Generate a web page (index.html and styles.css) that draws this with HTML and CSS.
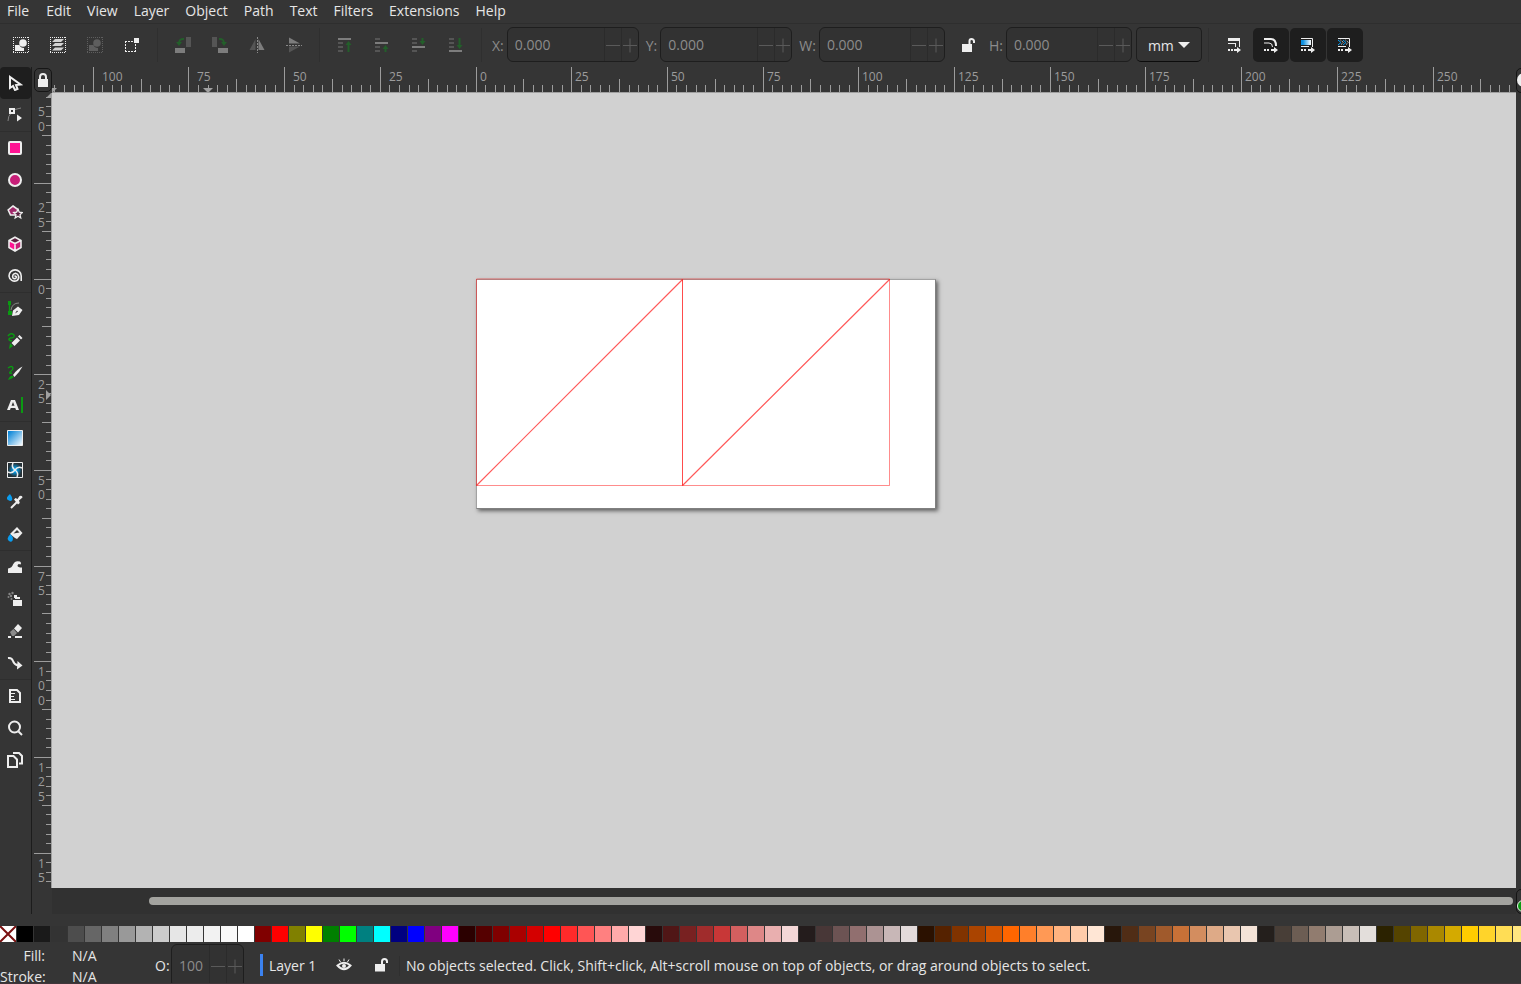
FILE: index.html
```html
<!DOCTYPE html>
<html lang="en">
<head>
<meta charset="utf-8">
<title>Inkscape</title>
<link rel="stylesheet" href="styles.css">
</head>
<body>
<nav class="menubar" aria-label="Main menu">
  <button>File</button><button>Edit</button><button>View</button><button>Layer</button><button>Object</button><button>Path</button><button>Text</button><button>Filters</button><button>Extensions</button><button>Help</button>
</nav>

<div class="toolbar">
  <div class="group">
    <button class="tb" aria-label="Select all"><svg viewBox="0 0 16 16"><path class="dots" d="M0 .5H16M0 15.5H16M.5 0V16M15.5 0V16"/><circle cx="10" cy="6" r="3.8"/><path d="M2 8h4.500q1 3 4.500 3v3H2z"/></svg></button>
    <button class="tb" aria-label="Select all in all layers"><svg viewBox="0 0 16 16"><path class="dots" d="M0 .5H16M0 15.5H16M.5 0V16M15.5 0V16"/><path d="M5 2h9l-3 3H2zM5 6h9l-3 3H2zM5 10.500h9l-3 3H2z" opacity=".85"/></svg></button>
    <button class="tb off" aria-label="Deselect"><svg viewBox="0 0 16 16"><path class="dots" d="M0 .5H16M0 15.5H16M.5 0V16M15.5 0V16"/><circle cx="10" cy="6" r="3.8"/><path d="M2 8h4.500q1 3 4.500 3v3H2z"/></svg></button>
    <button class="tb" aria-label="Toggle selection box"><svg viewBox="0 0 16 16"><path class="dash" d="M1 4.500H12M1 14.500H12M1.500 4V15M11.500 4V15"/><path d="M10 1h5v5h-5z"/></svg></button>
  </div>
  <div class="group">
    <button class="tb dim" aria-label="Rotate counterclockwise"><svg viewBox="0 0 16 16"><path class="shade" d="M11 0h5v10h-5z"/><path d="M0 11h10v5H0z"/><path class="arrow" d="M9 2Q4 1.500 4 6.500"/><path class="green" d="M1 5h6L4 9z"/></svg></button>
    <button class="tb dim" aria-label="Rotate clockwise"><svg viewBox="0 0 16 16"><path class="shade" d="M0 0h5v10H0z"/><path d="M6 11h10v5H6z"/><path class="arrow" d="M7 2Q12 1.500 12 6.500"/><path class="green" d="M9 5h6l-3 4z"/></svg></button>
    <button class="tb dim" aria-label="Flip horizontal"><svg viewBox="0 0 16 16"><path class="shade" d="M6.500 2v11H.5z"/><path d="M9.500 2v11h6z"/><path class="dash" d="M8.500 0V16"/></svg></button>
    <button class="tb dim" aria-label="Flip vertical"><svg viewBox="0 0 16 16"><path d="M3 .5v6h11z"/><path class="shade" d="M3 15.500v-6h11z"/><path class="dash" d="M0 8.500H16"/></svg></button>
  </div>
  <div class="group">
    <button class="tb dim" aria-label="Raise to top"><svg viewBox="0 0 16 16"><path d="M1 1h13v2H1z"/><path class="shade" d="M1 5h5v2H1zM1 9h5v2H1zM1 13h5v2H1z"/><path class="green" d="M11.500 4l3 4h-2v7h-2V8h-2z"/></svg></button>
    <button class="tb dim" aria-label="Raise"><svg viewBox="0 0 16 16"><path class="shade" d="M1 1h5v2H1zM1 9h5v2H1zM1 13h5v2H1z"/><path d="M1 5h13v2H1z"/><path class="green" d="M11.500 8l3 4h-2v3h-2v-3h-2z"/></svg></button>
    <button class="tb dim" aria-label="Lower"><svg viewBox="0 0 16 16"><path class="shade" d="M1 1h5v2H1zM1 5h5v2H1zM1 13h5v2H1z"/><path d="M1 9h13v2H1z"/><path class="green" d="M11.500 8l3-4h-2V1h-2v3h-2z"/></svg></button>
    <button class="tb dim" aria-label="Lower to bottom"><svg viewBox="0 0 16 16"><path class="shade" d="M1 1h5v2H1zM1 5h5v2H1zM1 9h5v2H1z"/><path d="M1 13h13v2H1z"/><path class="green" d="M11.500 12l3-4h-2V1h-2v7h-2z"/></svg></button>
  </div>
  <div class="fields">
    <label for="fx">X:</label><span class="spin"><input id="fx" value="0.000" disabled><button disabled aria-label="Decrease X"></button><button disabled aria-label="Increase X" class="plus"></button></span>
    <label for="fy">Y:</label><span class="spin"><input id="fy" value="0.000" disabled><button disabled aria-label="Decrease Y"></button><button disabled aria-label="Increase Y" class="plus"></button></span>
    <label for="fw">W:</label><span class="spin narrow"><input id="fw" value="0.000" disabled><button disabled aria-label="Decrease W"></button><button disabled aria-label="Increase W" class="plus"></button></span>
    <button class="lock" aria-label="Lock width and height"><svg viewBox="0 0 16 16"><path d="M1 7h10v8H1z"/><path class="line" d="M8.500 8V4Q8.500 2 10.500 2T13 4V6"/></svg></button>
    <label for="fh">H:</label><span class="spin narrow"><input id="fh" value="0.000" disabled><button disabled aria-label="Decrease H"></button><button disabled aria-label="Increase H" class="plus"></button></span>
    <span class="units"><select aria-label="Units"><option>mm</option></select></span>
  </div>
  <div class="group affect">
    <button class="tb" aria-label="Scale stroke width"><svg viewBox="0 0 16 16"><path d="M2 1h12v9h-1V4H2zM2 6h8v4H9V7H2zM2 12h2v2H2zM5 12h2v2H5zM8 12h3v-2l4 3-4 3v-2H8z"/></svg></button>
    <button class="tb on" aria-label="Scale rounded corners"><svg viewBox="0 0 16 16"><path class="line" d="M1 2H8Q13 2 13 9"/><path class="thin" d="M1 6H6Q9.500 6 9.500 10"/><path d="M1 12h2v2H1zM4 12h2v2H4zM8 12h3v-2l4 3-4 3v-2H8z"/></svg></button>
    <button class="tb on" aria-label="Move gradients"><svg viewBox="0 0 16 16"><defs><linearGradient id="g1"><stop offset=".2" stop-color="#0a8fe0"/><stop offset="1" stop-color="#fff"/></linearGradient></defs><path class="thin" d="M1 1.500H12.500V10"/><path fill="url(#g1)" d="M1 3h10v5H1z"/><path d="M1 9h8v1H1zM1 12h2v2H1zM4 12h2v2H4zM8 12h3v-2l4 3-4 3v-2H8z"/></svg></button>
    <button class="tb on" aria-label="Move patterns"><svg viewBox="0 0 16 16"><path class="thin" d="M1 1.500H12.500V10M1 9.500H9"/><path class="pat" d="M1 3l3 2.500L1 8M6 3l3 2.500L6 8"/><path class="thin weave" d="M3.500 3l3 2.500L3.500 8M8.500 3l3 2.500L8.500 8"/><path d="M1 12h2v2H1zM4 12h2v2H4zM8 12h3v-2l4 3-4 3v-2H8z"/></svg></button>
  </div>
</div>

<main class="work">
  <div class="toolbox" role="toolbar" aria-label="Tools">
    <button class="on" aria-label="Selector"><svg viewBox="0 0 16 16"><path class="line" d="M3 2V13L6 11L8 15L10.500 14L9 10L13.500 9.500Z"/></svg></button>
    <button aria-label="Node"><svg viewBox="0 0 16 16"><path class="faint" d="M1 14Q1 9 4 6M8 2.500L14 1"/><path fill-rule="evenodd" d="M2 1h6v6H2zM4 3v2h2V3zM10 7.500l5 3.500-5 3.500z"/></svg></button>
    <hr>
    <button aria-label="Rectangle"><svg viewBox="0 0 16 16"><rect class="pink" x="2" y="2" width="12" height="12" rx="1"/></svg></button>
    <button aria-label="Ellipse"><svg viewBox="0 0 16 16"><circle class="pink deep" cx="8" cy="8" r="6"/></svg></button>
    <button aria-label="Star"><svg viewBox="0 0 16 16"><path class="plum" d="M6 2L11 5.500L9.500 11H3.500L1.200 6Z"/><path class="plum star" d="M11 5.200l1.300 3 3 .3-2.300 2.200.7 3.300-2.700-1.700-2.800 1.700.8-3.300-2.300-2.200 3-.3z"/></svg></button>
    <button aria-label="3D box"><svg viewBox="0 0 16 16"><path fill="#ff1493" d="M2 4.500l6 3V15l-6-3z"/><path fill="#c71f78" d="M14 4.500l-6 3V15l6-3z"/><path fill="#5c2040" d="M8 1l6 3.500-6 3-6-3z"/><path class="line box" d="M8 1.200L14 4.500V11.500L8 15L2 11.500V4.500ZM2 4.500L8 7.500L14 4.500M8 7.500V15"/></svg></button>
    <button aria-label="Spiral"><svg viewBox="0 0 16 16"><path class="line spiral" d="M7.500 8.500A1.200 1.200 0 0 1 9.500 9A2 2 0 0 1 6 10A3.200 3.200 0 0 1 8.500 5.300A4 4 0 0 1 10 12.500A5.500 5.500 0 0 1 2 8A6 6 0 0 1 14.200 8V13"/></svg></button>
    <hr>
    <button aria-label="Pen"><svg viewBox="0 0 16 16"><path class="gline" d="M2.500 2V12"/><path class="green2" d="M1 0h3v4H1zM1 10h4v4H1z"/><path class="faint" d="M4 9Q5 2 12 2"/><path fill-rule="evenodd" d="M5 15L6 9.500L11 5.500L15.500 9L12 14ZM8 12.500L11 10.500L10 9.500Z"/></svg></button>
    <button aria-label="Pencil"><svg viewBox="0 0 16 16"><path class="gline" d="M1 3Q4-1 7 2Q8 5 3 5Q0 7 5 8"/><path class="green2" d="M3 10l3 3-4 3z"/><path d="M4.500 10L10 4.500L13 7.500L7.500 13ZM11 3.500L12.500 2L15.500 5L14 6.500Z"/></svg></button>
    <button aria-label="Calligraphy"><svg viewBox="0 0 16 16"><path class="gline" d="M1 3Q5 0 6 3Q6 5 3 7Q2 9 5 8"/><path class="green2" d="M1 15Q3 10 6 11T1 15z"/><path d="M6 10Q10 4 15.500 1.500Q12 8 7.500 12z"/></svg></button>
    <button aria-label="Text"><svg viewBox="0 0 16 16"><path fill-rule="evenodd" d="M0 13L4 3h4l4 10H9l-.7-2H3.700L3 13zM4.500 8.800h3L6 5z"/><path class="green2" d="M14 0h2v16h-2z"/></svg></button>
    <hr>
    <button aria-label="Gradient"><svg viewBox="0 0 16 16"><defs><linearGradient id="g2" x2="1" y2="1"><stop offset=".1" stop-color="#0a86d8"/><stop offset="1" stop-color="#fff"/></linearGradient></defs><path class="frame" fill="url(#g2)" d="M.5 .5h15v15H.5z"/></svg></button>
    <button aria-label="Mesh"><svg viewBox="0 0 16 16"><defs><radialGradient id="g3"><stop offset=".2" stop-color="#00a5f5"/><stop offset=".9" stop-color="#263238"/></radialGradient></defs><path class="frame" fill="url(#g3)" d="M.5 .5h15v15H.5z"/><path class="mesh" d="M8 8Q4 5 6 1M8 8Q11 4 15 6M8 8Q12 11 10 15M8 8Q5 12 1 10"/></svg></button>
    <button aria-label="Dropper"><svg viewBox="0 0 16 16"><path class="blue" d="M3 0Q6 4 5 6T1 6T3 0z"/><path class="line" d="M4 14L10.500 7.500"/><path d="M7 5.500l1.500-1.500L10.500 5l2-3q3-1 3 1.500L12 6.500l.8 2.500L11 10.500z"/></svg></button>
    <button aria-label="Paint bucket"><svg viewBox="0 0 16 16"><path d="M3 8L10 1L15.500 7L10 13L8 12z"/><path fill="#353535" d="M6.500 7.500L10 4L12.500 6.500z"/><path class="blue" d="M3.500 8Q7 12 5.500 14.500T1.500 14.500T3.500 8z"/></svg></button>
    <hr>
    <button aria-label="Tweak"><svg viewBox="0 0 16 16"><path d="M1 14V9.500Q5 9 6 5.500Q8 1 13 2.500Q15 4 13.500 5.500Q11 4 10.500 6.500Q10.500 8.500 15 8.500V14z"/></svg></button>
    <button aria-label="Spray"><svg viewBox="0 0 16 16"><path d="M6 9h9v6H6zM8 6h5v2H8zM7 4h3v3H7z"/><g fill="#858585"><circle cx="2.500" cy="3" r="1.200"/><circle cx="5.500" cy="2" r="1.200"/><circle cx="4" cy="5" r="1.200"/><circle cx="1.500" cy="6" r="1"/><circle cx="4.500" cy="8" r="1"/></g></svg></button>
    <button aria-label="Eraser"><svg viewBox="0 0 16 16"><path d="M7 5.500L11 1L15 5L11 9.500zM1 13h3v2H1zM8 13h7v2H8z"/><path fill="#8c8c8c" d="M3 9L6.500 6L10 10L7 13H5z"/></svg></button>
    <button aria-label="Connector"><svg viewBox="0 0 16 16"><path class="line" d="M1 3Q5 2.500 6 6T11 10.500"/><path d="M10.500 6L15.500 10.500L10 14.500z"/></svg></button>
    <hr>
    <button aria-label="Measure"><svg viewBox="0 0 16 16"><path class="line" d="M3 2h7l3 3v9H3z"/><path class="thin" d="M4 5.500h4M4 8.500h3M4 11.500h4"/></svg></button>
    <button aria-label="Zoom"><svg viewBox="0 0 16 16"><circle class="line" cx="7.500" cy="7" r="5.500"/><path class="line" d="M11.500 11.500L15 15"/></svg></button>
    <button aria-label="Pages"><svg viewBox="0 0 16 16"><path class="line" d="M1 4h5.500L10 7.500V15H1zM6 1h6L15 4v7.500h-3"/></svg></button>
  </div>
  <div class="corner"><button aria-label="Lock guides"><svg viewBox="0 0 12 16"><path d="M1 7h10v8H1z"/><path class="line" d="M3 8V5Q3 2 6 2T9 5V8"/></svg></button></div>
  <div class="ruler-h"><svg id="rh" width="100%" height="26"></svg></div>
  <div class="ruler-v"><svg id="rv" width="20" height="100%"></svg></div>
  <div class="canvas">
    <div class="page"></div>
    <svg class="drawing" width="420" height="214" viewBox="0 0 420 214"><path d="M.5 206.500V0H413.500M.5 206.500H413.500V0"/><path class="strong" d="M206.500 .5V206.500"/><path class="wide" d="M.5 206.500L206.500 .5M206.500 206.500L413.500 .5"/></svg>
  </div>
  <div class="edge"><button aria-label="Sticky zoom"></button><button class="cms" aria-label="Color management"></button></div>
  <div class="scroll"><div class="thumb"></div></div>
</main>

<div class="palette" id="palette"></div>

<footer class="status">
  <dl><dt>Fill:</dt><dd>N/A</dd><dt>Stroke:</dt><dd>N/A</dd></dl>
  <label for="op">O:</label><span class="spin opacity"><input id="op" value="100" disabled><button disabled aria-label="Decrease opacity"></button><button disabled aria-label="Increase opacity" class="plus"></button></span>
  <button class="layer">Layer 1</button>
  <button class="sicon eye" aria-label="Toggle layer visibility"><svg viewBox="0 0 16 16"><path class="line" d="M1.500 8.500Q8 3 14.500 8.500Q8 16 1.500 8.500Z"/><circle cx="8" cy="9" r="2"/><path class="thin" d="M3 2.500L4.500 5M8 1.500V4M13 2.500L11.500 5"/></svg></button>
  <button class="sicon" aria-label="Toggle layer lock"><svg viewBox="0 0 16 16"><path d="M2 7h10v7.500H2z"/><path class="line" d="M9 8V4.500Q9 2 11.500 2T14 4.500V6"/></svg></button>
  <p>No objects selected. Click, Shift+click, Alt+scroll mouse on top of objects, or drag around objects to select.</p>
</footer>
<script src="app.js"></script>
</body>
</html>
```
FILE: styles.css
```css
* { box-sizing: border-box; }
body {
  margin: 0;
  height: 100vh;
  display: flex;
  flex-direction: column;
  overflow: hidden;
  background: #353535;
  color: #e6e6e6;
  font: 14px/20px "Open Sans", "Noto Sans", sans-serif;
}
button, input, select {
  font: inherit;
  color: inherit;
  background: none;
  border: 0;
  margin: 0;
  padding: 0;
}
svg { display: block; fill: #eeeeee; }
button svg { width: 16px; height: 16px; }

.line { fill: none; stroke: #eeeeee; stroke-width: 2; }
.thin { fill: none; stroke: #eeeeee; stroke-width: 1; }
.weave { stroke-dasharray: 1 1; }
.pat { fill: none; stroke: #0a9df0; stroke-width: 1; }
.faint { fill: none; stroke: #858585; stroke-width: 1; }
.dots { fill: none; stroke: #eeeeee; stroke-width: 1; stroke-dasharray: 1 1; }
.dash { fill: none; stroke: #eeeeee; stroke-width: 1; stroke-dasharray: 2 1; }
.pink { fill: #ff1493; stroke: #eeeeee; stroke-width: 2; }
.deep { fill: #c71f78; }
.plum { fill: #a0286a; stroke: #eeeeee; stroke-width: 1.6; }
.star { fill: #5c2040; stroke-width: 1.3; }
.box { stroke-width: 1.6; }
.spiral { stroke-width: 1.6; }
.mesh { fill: none; stroke: #eeeeee; stroke-width: 1.5; }
.gline { fill: none; stroke: #0b9a12; stroke-width: 1.4; }
.green2 { fill: #0b9a12; }
.blue { fill: #0a9df0; }
.frame { stroke: #eeeeee; stroke-width: 1; }

.menubar {
  flex: none;
  display: flex;
  height: 24px;
  border-bottom: 1px solid #2e2e2e;
}
.menubar button { padding: 0 8px 2px; }
.menubar button:first-child { padding: 0 9px 2px 7px; }

.toolbar { flex: none; display: flex; align-items: center; height: 43px; padding-bottom: 2px; }
.group {
  display: flex;
  gap: 1px;
  padding: 0 7px;
  border-right: 1px solid #2f2f2f;
}
.group:first-child { padding-left: 3px; }
.affect { border: 0; border-left: 1px solid #2f2f2f; margin-left: 6px; }
.tb {
  width: 36px;
  height: 34px;
  display: grid;
  place-items: center;
  border-radius: 5px;
}
.tb.on { background: #1e1e1e; }
.tb.off svg { opacity: .22; }
.dim svg { fill: #7d7d7d; }
.dim .shade { fill: #555555; }
.dim .dash { stroke: #8a8a8a; }
.dim .green { fill: #235f2a; }
.dim .arrow { fill: none; stroke: #235f2a; stroke-width: 2; }

.fields { display: flex; align-items: center; padding-left: 10px; color: #8c8c8c; }
.fields label { margin: 3px 3px 0 7px; }
.fields label:first-child { margin-left: 0; }
.spin {
  display: flex;
  width: 132px;
  height: 35px;
  border: 1px solid #1e1e1e;
  border-radius: 6px;
  background: #323232;
  color: #8c8c8c;
  overflow: hidden;
}
.narrow { width: 126px; }
.spin input { flex: 1; min-width: 0; padding: 1px 0 0 7px; }
.spin button {
  position: relative;
  width: 17px;
  border-left: 1px solid #2b2b2b;
}
.spin button::before, .plus::after {
  content: "";
  position: absolute;
  left: 1px;
  right: 1px;
  top: 50%;
  height: 1px;
  background: #5a5a5a;
}
.spin .plus::after { transform: rotate(90deg); }
.lock { width: 42px; height: 34px; padding-left: 6px; display: grid; place-items: center; }
.fields .lock + label { margin-left: 2px; }
.units { position: relative; margin-left: 4px; color: #e6e6e6; }
.units select {
  appearance: none;
  display: block;
  width: 66px;
  height: 35px;
  padding: 3px 0 0 11px;
  border: 1px solid #1e1e1e;
  border-bottom-color: #0c0c0c;
  border-radius: 5px;
  background: #333333;
}
.units::after {
  content: "";
  position: absolute;
  right: 12px;
  top: 15px;
  border: 6px solid transparent;
  border-top: 6px solid #eeeeee;
  border-bottom: 0;
  pointer-events: none;
}

.work {
  flex: 1;
  min-height: 0;
  display: grid;
  grid-template: 26px minmax(0, 1fr) 26px / 32px 20px minmax(0, 1fr) 5px;
}
.toolbox {
  grid-row: 1 / 4;
  border-right: 1px solid #1c1c1c;
  overflow: hidden;
}
.toolbox button {
  display: grid;
  place-items: center;
  width: 31px;
  height: 32px;
  padding-right: 1px;
  border-radius: 4px;
}
.toolbox .on { background: #1e1e1e; }
.toolbox hr { margin: 0; border: 0; height: 1px; background: #2e2e2e; }
.corner { padding: 1px 0 0 2px; }
.corner button {
  width: 18px;
  height: 24px;
  display: grid;
  place-items: center;
  border: 1px solid #161616;
  border-radius: 5px;
}
.corner svg { width: 12px; }
.ruler-h { overflow: hidden; border-bottom: 1px solid #a0a0a0; }
.ruler-v { grid-column: 2; grid-row: 2; overflow: hidden; border-right: 1px solid #a0a0a0; }
.tick { stroke: #9c9c9c; stroke-width: 1; fill: none; shape-rendering: crispEdges; }
.mark { fill: #a0a0a0; }
.num { fill: #9c9c9c; font-size: 12px; }
.canvas { position: relative; overflow: hidden; background: #d1d1d1; }
.page {
  position: absolute;
  left: 424px;
  top: 186px;
  width: 460px;
  height: 230px;
  background: #ffffff;
  border: 1px solid #a2a2a2;
  border-right-color: #808080;
  border-bottom-color: #808080;
  box-shadow: 2px 2px 4px #606060;
}
.drawing {
  position: absolute;
  left: 424px;
  top: 186px;
  overflow: visible;
  fill: none;
  stroke: #ff0000;
  stroke-opacity: .45;
  stroke-width: 1;
}
.strong { stroke-opacity: .7; }
.wide { stroke-width: 1.2; stroke-opacity: .65; }
.edge {
  grid-column: 4;
  grid-row: 1 / 4;
  display: flex;
  flex-direction: column;
  justify-content: space-between;
  padding-top: 1px;
  overflow: hidden;
}
.edge button {
  position: relative;
  width: 24px;
  height: 25px;
  border: 1px solid #141414;
  border-radius: 5px;
}
.edge button::before {
  content: "";
  position: absolute;
  left: 0;
  top: 4px;
  width: 14px;
  height: 14px;
  border-radius: 50%;
  background: #eeeeee;
}
.edge .cms::before {
  top: 10px;
  width: 10px;
  height: 10px;
  background: #0b9a12;
  border: 1px solid #eeeeee;
}
.scroll { grid-column: 3; grid-row: 3; padding: 9px 3px 0 97px; background: #313131; }
.thumb { height: 8px; border-radius: 4px; background: #a3a39f; }

.palette { flex: none; display: flex; gap: 1px; height: 28px; padding-top: 12px; overflow: hidden; }
.swatch { flex: none; width: 16px; height: 16px; }
.none { background: #ffffff; fill: none; stroke: #7a1010; stroke-width: 2; }

.status {
  flex: none;
  display: flex;
  align-items: center;
  height: 42px;
  overflow: hidden;
  border-bottom: 1px solid #41353a;
}
.status dl {
  display: grid;
  grid-template-columns: 45px 60px;
  column-gap: 27px;
  row-gap: 1px;
  width: 155px;
  margin: 0;
  padding-top: 7px;
}
.status dt { text-align: right; }
.status dd { margin: 0; }
.status label { width: 16px; margin-top: 6px; }
.opacity { width: 73px; height: 44px; margin-top: 6px; flex: none; }
.layer {
  height: 22px;
  margin: 4px 0 0 16px;
  padding: 2px 0 0 6px;
  width: 65px;
  text-align: left;
  line-height: 20px;
  white-space: nowrap;
  border-left: 3px solid #3b82f0;
}
.sicon { width: 37px; margin-top: 4px; display: grid; place-items: center; }
.status p {
  margin: 6px 0 0;
  padding-left: 6px;
  border-left: 1px solid #2f2f2f;
  white-space: nowrap;
}
```
FILE: app.js
```js
const NS = "http://www.w3.org/2000/svg";
const STEP = 9.57; // pixels for 2.5 mm

function add(svg, name, cls, attrs, text) {
  const el = document.createElementNS(NS, name);
  el.setAttribute("class", cls);
  for (const key in attrs) el.setAttribute(key, attrs[key]);
  if (text !== undefined) el.textContent = text;
  svg.appendChild(el);
}

function buildRuler(svg, vertical, origin, length, marks) {
  const depth = vertical ? 20 : 26;
  const sizes = vertical ? [18, 10, 6] : [26, 14, 8];
  let d = "";
  svg.replaceChildren();
  for (let i = -60; i < 400; i++) {
    const pos = Math.floor(origin + i * STEP) + 0.5;
    if (pos < -20 || pos > length) continue;
    const size = i % 10 === 0 ? sizes[0] : i % 5 === 0 ? sizes[1] : sizes[2];
    d += vertical ? `M${depth - size} ${pos}H${depth}` : `M${pos} ${depth - size}V${depth}`;
    if (i % 10 !== 0) continue;
    const label = String(Math.abs(i * 2.5));
    if (vertical) {
      [...label].forEach((digit, n) => {
        const y = Math.round(pos + 14 + (n + (i < 0 ? 1 : 0)) * 14.6);
        if (y < length) add(svg, "text", "num", { x: 6, y }, digit);
      });
    } else if (pos + 30 < length) {
      add(svg, "text", "num", { x: Math.floor(pos) + (i < 0 ? 9 : 4), y: 14 }, label);
    }
  }
  add(svg, "path", "tick", { d });
  add(svg, "path", "mark", { d: marks });
}

function drawRulers() {
  const h = document.getElementById("rh");
  const v = document.getElementById("rv");
  buildRuler(h, false, 424, h.parentElement.clientWidth, "M0 26v-5h5zM151 21h10l-5 5z");
  buildRuler(v, true, 186, v.parentElement.clientHeight, "M14 5l5-5v5zM14 297v10l5-5z");
}
drawRulers();
addEventListener("resize", drawRulers);

const colors = `000000 1a1a1a 333333 4d4d4d 666666 808080 999999 b3b3b3 cccccc e6e6e6 ececec f2f2f2 f9f9f9 ffffff
800000 ff0000 808000 ffff00 008000 00ff00 008080 00ffff 000080 0000ff 800080 ff00ff
2b0000 550000 800000 aa0000 d40000 ff0000 ff2a2a ff5555 ff8080 ffaaaa ffd5d5
280b0b 501616 782121 a02c2c c83737 d35f5f de8787 e9afaf f4d7d7
241c1c 483737 6c5353 916f6f ac9393 c8b7b7 e3dbdb
2b1100 552200 803300 aa4400 d45500 ff6600 ff7f2a ff9955 ffb380 ffccaa ffe6d5
28170b 502d16 784421 a05a2c c87137 d38d5f deaa87 e9c6af f4e3d7
241f1c 483e37 6c5d53 917c6f ac9d93 c8beb7 e3dedb
2b2200 554400 806600 aa8800 d4aa00 ffcc00 ffd42a ffdd55 ffe680`.split(/\s+/);

const palette = document.getElementById("palette");
palette.innerHTML =
  '<button class="swatch" aria-label="None"><svg class="none" viewBox="0 0 16 16"><path d="M0 0L16 16M16 0L0 16"/></svg></button>' +
  colors.map(c => `<button class="swatch" aria-label="#${c}" style="background:#${c}"></button>`).join("");
```
